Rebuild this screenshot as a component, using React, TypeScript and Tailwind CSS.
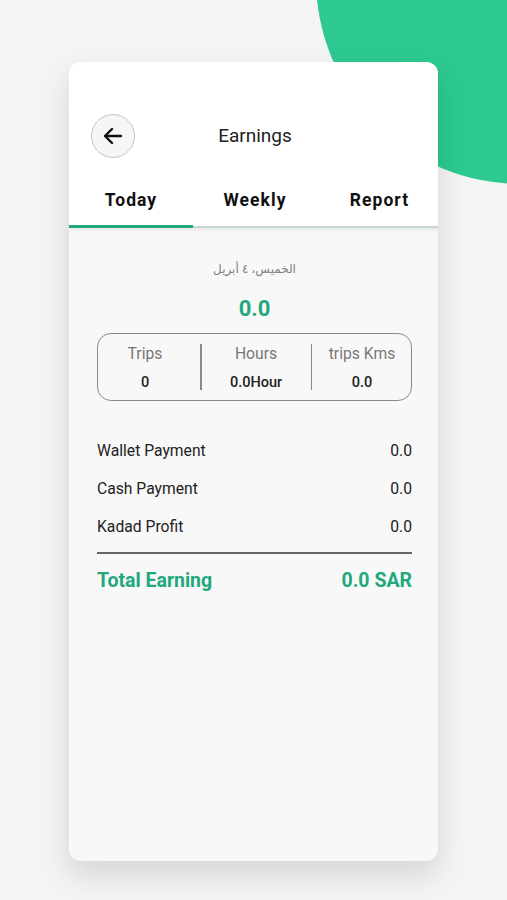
const rows = [
  { label: "Wallet Payment", value: "0.0" },
  { label: "Cash Payment", value: "0.0" },
  { label: "Kadad Profit", value: "0.0" },
];

const stats = [
  { label: "Trips", value: "0", width: "w-[102px] pr-[8px]" },
  { label: "Hours", value: "0.0Hour", width: "w-[109px]" },
  { label: "trips Kms", value: "0.0", width: "flex-1 pl-[1px]" },
];

export default function App() {
  return (
    <div
      className="relative h-[900px] w-[507px] overflow-hidden bg-[#f4f4f4]"
      style={{ fontFamily: "Roboto, 'Noto Sans', sans-serif" }}
    >
      {/* decorative blob */}
      <div className="absolute left-[316px] top-[-226px] h-[410px] w-[410px] rounded-full bg-[#2dc990]" />

      <div className="relative ml-[69px] mt-[62px] flex h-[799px] w-[369px] flex-col overflow-hidden rounded-[12px] bg-[#f8f8f8] shadow-[0_14px_30px_rgba(0,0,0,0.13)]">
        <div className="bg-white shadow-[0_2px_4px_rgba(0,0,0,0.08)]">
          <div className="relative mt-[52px] flex h-[44px] items-center justify-center">
            <button className="absolute left-[22px] flex h-[44px] w-[44px] items-center justify-center rounded-full border border-[#c4c4c4] bg-[#f6f6f6]">
              <svg width="24" height="24" viewBox="0 0 24 24" fill="none" stroke="#111" strokeWidth="2.4" strokeLinecap="round" strokeLinejoin="round">
                <path d="M20 12H4.5" />
                <path d="M11 5l-7 7 7 7" />
              </svg>
            </button>
            <span className="pl-[3px] text-[19px] text-[#222]">Earnings</span>
          </div>
          <div className="mt-[32px] flex h-[20px] items-center text-[17.5px] font-bold tracking-[0.06em] text-[#111]">
            <div className="flex w-[124px] justify-center">Today</div>
            <div className="flex w-[124px] justify-center">Weekly</div>
            <div className="flex flex-1 justify-center pl-[4px]">Report</div>
          </div>
          <div className="mt-[14px] flex h-[4px] items-end bg-white">
            <div className="h-[3px] w-[124px] bg-[#21a87c]" />
            <div className="h-[2px] flex-1 bg-[#c6d6d0]" />
          </div>
        </div>

        <div className="flex flex-col pl-[28px] pr-[26px]">
          <div
            className="mt-[32px] text-center text-[12px] text-[#808080]"
            dir="rtl"
            style={{ fontFamily: "'Noto Sans', 'DejaVu Sans', sans-serif" }}
          >
            الخميس، ٤ أبريل
          </div>
          <div className="mt-[17px] text-center text-[22px] font-bold leading-[28px] text-[#21a87c]">0.0</div>

          <div className="mt-[10px] flex h-[68px] items-stretch rounded-[14px] border border-[#8a8a8a]">
            {stats.map((s, i) => (
              <div key={s.label} className={`flex items-stretch ${i === 2 ? "flex-1" : ""}`}>
                {i > 0 && <div className="my-[10px] w-[1.5px] bg-[#8a8a8a]" />}
                <div className={`flex flex-col items-center pt-[9px] ${s.width}`}>
                  <span className="text-[15.7px] leading-[22px] text-[#777]">{s.label}</span>
                  <span className="mt-[9px] text-[14.5px] font-medium leading-[18px] text-[#222]">{s.value}</span>
                </div>
              </div>
            ))}
          </div>

          <div className="mt-[41px] flex flex-col gap-[20px]">
            {rows.map((r) => (
              <div key={r.label} className="flex h-[18px] items-center justify-between text-[15.7px] text-[#222]">
                <span>{r.label}</span>
                <span>{r.value}</span>
              </div>
            ))}
          </div>

          <div className="mt-[16px] h-[2px] bg-[#666]" />

          <div className="mt-[12px] flex items-center justify-between text-[19.5px] font-bold text-[#21a87c]">
            <span>Total Earning</span>
            <span>0.0 SAR</span>
          </div>
        </div>
      </div>
    </div>
  );
}
